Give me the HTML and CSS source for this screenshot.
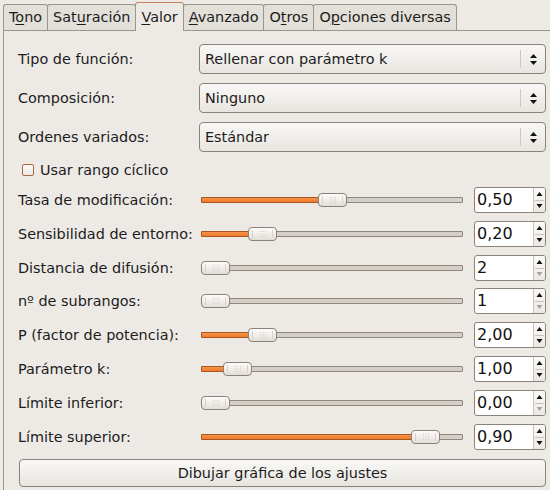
FILE: index.html
```html
<!DOCTYPE html>
<html>
<head>
<meta charset="utf-8">
<link rel="stylesheet" href="styles.css">
</head>
<body>
<div class="tabs">
  <div class="tab">T<u>o</u>no</div>
  <div class="tab">Sat<u>u</u>ración</div>
  <div class="tab active"><u>V</u>alor</div>
  <div class="tab"><u>A</u>vanzado</div>
  <div class="tab">O<u>t</u>ros</div>
  <div class="tab">O<u>p</u>ciones diversas</div>
</div>
<div class="panel">
  <div class="combo-row">
    <span class="label">Tipo de función:</span>
    <div class="combo"><span class="combo-text">Rellenar con parámetro k</span><span class="combo-sep"></span><svg class="combo-arrows" width="7" height="11" viewBox="0 0 7 11"><polygon points="0,4 3.5,0 7,4"/><polygon points="0,7 3.5,11 7,7"/></svg></div>
  </div>
  <div class="combo-row">
    <span class="label">Composición:</span>
    <div class="combo"><span class="combo-text">Ninguno</span><span class="combo-sep"></span><svg class="combo-arrows" width="7" height="11" viewBox="0 0 7 11"><polygon points="0,4 3.5,0 7,4"/><polygon points="0,7 3.5,11 7,7"/></svg></div>
  </div>
  <div class="combo-row">
    <span class="label">Ordenes variados:</span>
    <div class="combo"><span class="combo-text">Estándar</span><span class="combo-sep"></span><svg class="combo-arrows" width="7" height="11" viewBox="0 0 7 11"><polygon points="0,4 3.5,0 7,4"/><polygon points="0,7 3.5,11 7,7"/></svg></div>
  </div>
  <div class="check-row"><span class="checkbox"></span><span>Usar rango cíclico</span></div>

  <div class="sliders">
    <span class="label">Tasa de modificación:</span>
    <div class="scale"><div class="trough"><div class="fill" style="width:120px"></div><div class="handle" style="left:116px"><span class="grip"></span></div></div></div>
    <div class="spin"><span class="val">0,50</span><span class="arrows"><svg width="11" height="24" viewBox="0 0 11 24"><polygon points="2.5,8 5.5,4 8.5,8"/><line x1="1" y1="12.5" x2="10" y2="12.5" stroke="#c9c3bb"/><polygon points="2.5,16 5.5,20 8.5,16"/></svg></span></div>

    <span class="label">Sensibilidad de entorno:</span>
    <div class="scale"><div class="trough"><div class="fill" style="width:50px"></div><div class="handle" style="left:46px"><span class="grip"></span></div></div></div>
    <div class="spin"><span class="val">0,20</span><span class="arrows"><svg width="11" height="24" viewBox="0 0 11 24"><polygon points="2.5,8 5.5,4 8.5,8"/><line x1="1" y1="12.5" x2="10" y2="12.5" stroke="#c9c3bb"/><polygon points="2.5,16 5.5,20 8.5,16"/></svg></span></div>

    <span class="label">Distancia de difusión:</span>
    <div class="scale"><div class="trough"><div class="handle" style="left:-1px"><span class="grip"></span></div></div></div>
    <div class="spin"><span class="val">2</span><span class="arrows"><svg width="11" height="24" viewBox="0 0 11 24"><polygon points="2.5,8 5.5,4 8.5,8"/><line x1="1" y1="12.5" x2="10" y2="12.5" stroke="#c9c3bb"/><polygon class="dis" points="2.5,16 5.5,20 8.5,16"/></svg></span></div>

    <span class="label">nº de subrangos:</span>
    <div class="scale"><div class="trough"><div class="handle" style="left:-1px"><span class="grip"></span></div></div></div>
    <div class="spin"><span class="val">1</span><span class="arrows"><svg width="11" height="24" viewBox="0 0 11 24"><polygon points="2.5,8 5.5,4 8.5,8"/><line x1="1" y1="12.5" x2="10" y2="12.5" stroke="#c9c3bb"/><polygon class="dis" points="2.5,16 5.5,20 8.5,16"/></svg></span></div>

    <span class="label">P (factor de potencia):</span>
    <div class="scale"><div class="trough"><div class="fill" style="width:50px"></div><div class="handle" style="left:46px"><span class="grip"></span></div></div></div>
    <div class="spin"><span class="val">2,00</span><span class="arrows"><svg width="11" height="24" viewBox="0 0 11 24"><polygon points="2.5,8 5.5,4 8.5,8"/><line x1="1" y1="12.5" x2="10" y2="12.5" stroke="#c9c3bb"/><polygon points="2.5,16 5.5,20 8.5,16"/></svg></span></div>

    <span class="label">Parámetro k:</span>
    <div class="scale"><div class="trough"><div class="fill" style="width:26px"></div><div class="handle" style="left:21px"><span class="grip"></span></div></div></div>
    <div class="spin"><span class="val">1,00</span><span class="arrows"><svg width="11" height="24" viewBox="0 0 11 24"><polygon points="2.5,8 5.5,4 8.5,8"/><line x1="1" y1="12.5" x2="10" y2="12.5" stroke="#c9c3bb"/><polygon points="2.5,16 5.5,20 8.5,16"/></svg></span></div>

    <span class="label">Límite inferior:</span>
    <div class="scale"><div class="trough"><div class="handle" style="left:-1px"><span class="grip"></span></div></div></div>
    <div class="spin"><span class="val">0,00</span><span class="arrows"><svg width="11" height="24" viewBox="0 0 11 24"><polygon points="2.5,8 5.5,4 8.5,8"/><line x1="1" y1="12.5" x2="10" y2="12.5" stroke="#c9c3bb"/><polygon class="dis" points="2.5,16 5.5,20 8.5,16"/></svg></span></div>

    <span class="label">Límite superior:</span>
    <div class="scale"><div class="trough"><div class="fill" style="width:214px"></div><div class="handle" style="left:209px"><span class="grip"></span></div></div></div>
    <div class="spin"><span class="val">0,90</span><span class="arrows"><svg width="11" height="24" viewBox="0 0 11 24"><polygon points="2.5,8 5.5,4 8.5,8"/><line x1="1" y1="12.5" x2="10" y2="12.5" stroke="#c9c3bb"/><polygon points="2.5,16 5.5,20 8.5,16"/></svg></span></div>
  </div>

  <div class="button">Dibujar gráfica de los ajustes</div>
</div>
</body>
</html>
```
FILE: styles.css
```css
html, body {
  margin: 0;
  padding: 0;
}
body {
  background: #edeae6;
  font-family: "DejaVu Sans", sans-serif;
  font-size: 14.4px;
  color: #1c1c1c;
  width: 550px;
  height: 490px;
  overflow: hidden;
}
.tabs {
  display: flex;
  align-items: flex-end;
  height: 30px;
  padding-left: 3px;
  position: relative;
  z-index: 1;
}
.tab {
  box-sizing: border-box;
  height: 26px;
  border: 1px solid #9c958c;
  border-bottom: none;
  border-radius: 3px 3px 0 0;
  padding: 0 5px 1px 5px;
  line-height: 24px;
  background: #e3dfd9;
  margin-left: -1px;
  white-space: nowrap;
}
.tab:first-child {
  margin-left: 0;
}
.tab u {
  text-decoration-thickness: 1px;
  text-underline-offset: 2px;
}
.tab.active {
  height: 29px;
  padding-top: 2px;
  padding-bottom: 2px;
  background: #edeae6;
  border-top-color: #c4835c;
  margin-bottom: -1px;
  position: relative;
  z-index: 2;
}
.panel {
  margin-left: 3px;
  border-left: 1px solid #9c958c;
  border-top: 1px solid #9c958c;
  padding: 13px 0 0 14px;
  height: 460px;
  box-sizing: border-box;
}
.combo-row {
  display: grid;
  grid-template-columns: 181px 347px;
  align-items: center;
  height: 30px;
  margin-bottom: 9px;
}
.combo {
  box-sizing: border-box;
  height: 30px;
  border: 1px solid #8b8379;
  border-radius: 4px;
  background: linear-gradient(#f8f7f5, #f1efec 50%, #e8e5e0);
  display: flex;
  align-items: center;
  padding-left: 5px;
}
.combo-text {
  flex: 1;
}
.combo-sep {
  width: 1px;
  height: 18px;
  background: #cdc7bf;
  margin-right: 9px;
}
.combo-arrows {
  fill: #111;
  margin-right: 8px;
}
.check-row {
  display: flex;
  align-items: center;
  height: 18px;
  padding-left: 4px;
}
.checkbox {
  box-sizing: border-box;
  width: 12px;
  height: 12px;
  border: 1px solid #a8673f;
  border-radius: 2px;
  background: linear-gradient(#fbfaf9, #ece9e5);
  margin-right: 6px;
}
.sliders {
  margin-top: 8px;
  display: grid;
  grid-template-columns: 183px 273px 72px;
  grid-auto-rows: 26px;
  row-gap: 7.8px;
  align-items: center;
}
.label {
  white-space: nowrap;
}
.scale {
  width: 262px;
}
.trough {
  position: relative;
  box-sizing: border-box;
  height: 6px;
  border: 1px solid #8e877e;
  background: #d4cec6;
  border-radius: 1px;
}
.fill {
  position: absolute;
  left: -1px;
  top: -1px;
  height: 6px;
  box-sizing: border-box;
  border: 1px solid #a8561d;
  background: linear-gradient(#f7944c, #ef7a2c);
  border-radius: 1px;
}
.handle {
  position: absolute;
  top: -5px;
  width: 29px;
  height: 14px;
  box-sizing: border-box;
  border: 1px solid #8a8279;
  border-radius: 4px;
  background: linear-gradient(#fdfcfb, #f1eeea 50%, #e2ddd6);
  display: flex;
  align-items: center;
  justify-content: center;
}
.handle::before, .handle::after {
  content: "";
  position: absolute;
  top: 2px;
  bottom: 2px;
  width: 1px;
  background: #d6d1ca;
}
.handle::before { left: 3px; }
.handle::after { right: 3px; }
.grip {
  width: 8px;
  height: 8px;
  background-image: radial-gradient(circle, #c2bcb4 0.7px, transparent 0.9px);
  background-size: 2.7px 2.7px;
}
.spin {
  box-sizing: border-box;
  width: 72px;
  height: 26px;
  border: 1px solid #8b8379;
  border-radius: 3px;
  background: #fff;
  display: flex;
  overflow: hidden;
}
.val {
  flex: 1;
  padding-left: 2px;
  line-height: 24px;
  font-size: 16px;
  color: #111;
}
.arrows {
  width: 11px;
  border-left: 1px solid #c9c3bb;
  background: linear-gradient(#fbfaf9, #ebe8e4);
  display: flex;
}
.arrows svg {
  fill: #111;
}
.arrows .dis {
  fill: #a9a39b;
}
.button {
  box-sizing: border-box;
  margin: 9.5px 0 0 1px;
  width: 527px;
  height: 28px;
  border: 1px solid #8b8379;
  border-radius: 4px;
  background: linear-gradient(#f9f8f6, #f1efec 50%, #e7e4df);
  display: flex;
  align-items: center;
  justify-content: center;
}
```
